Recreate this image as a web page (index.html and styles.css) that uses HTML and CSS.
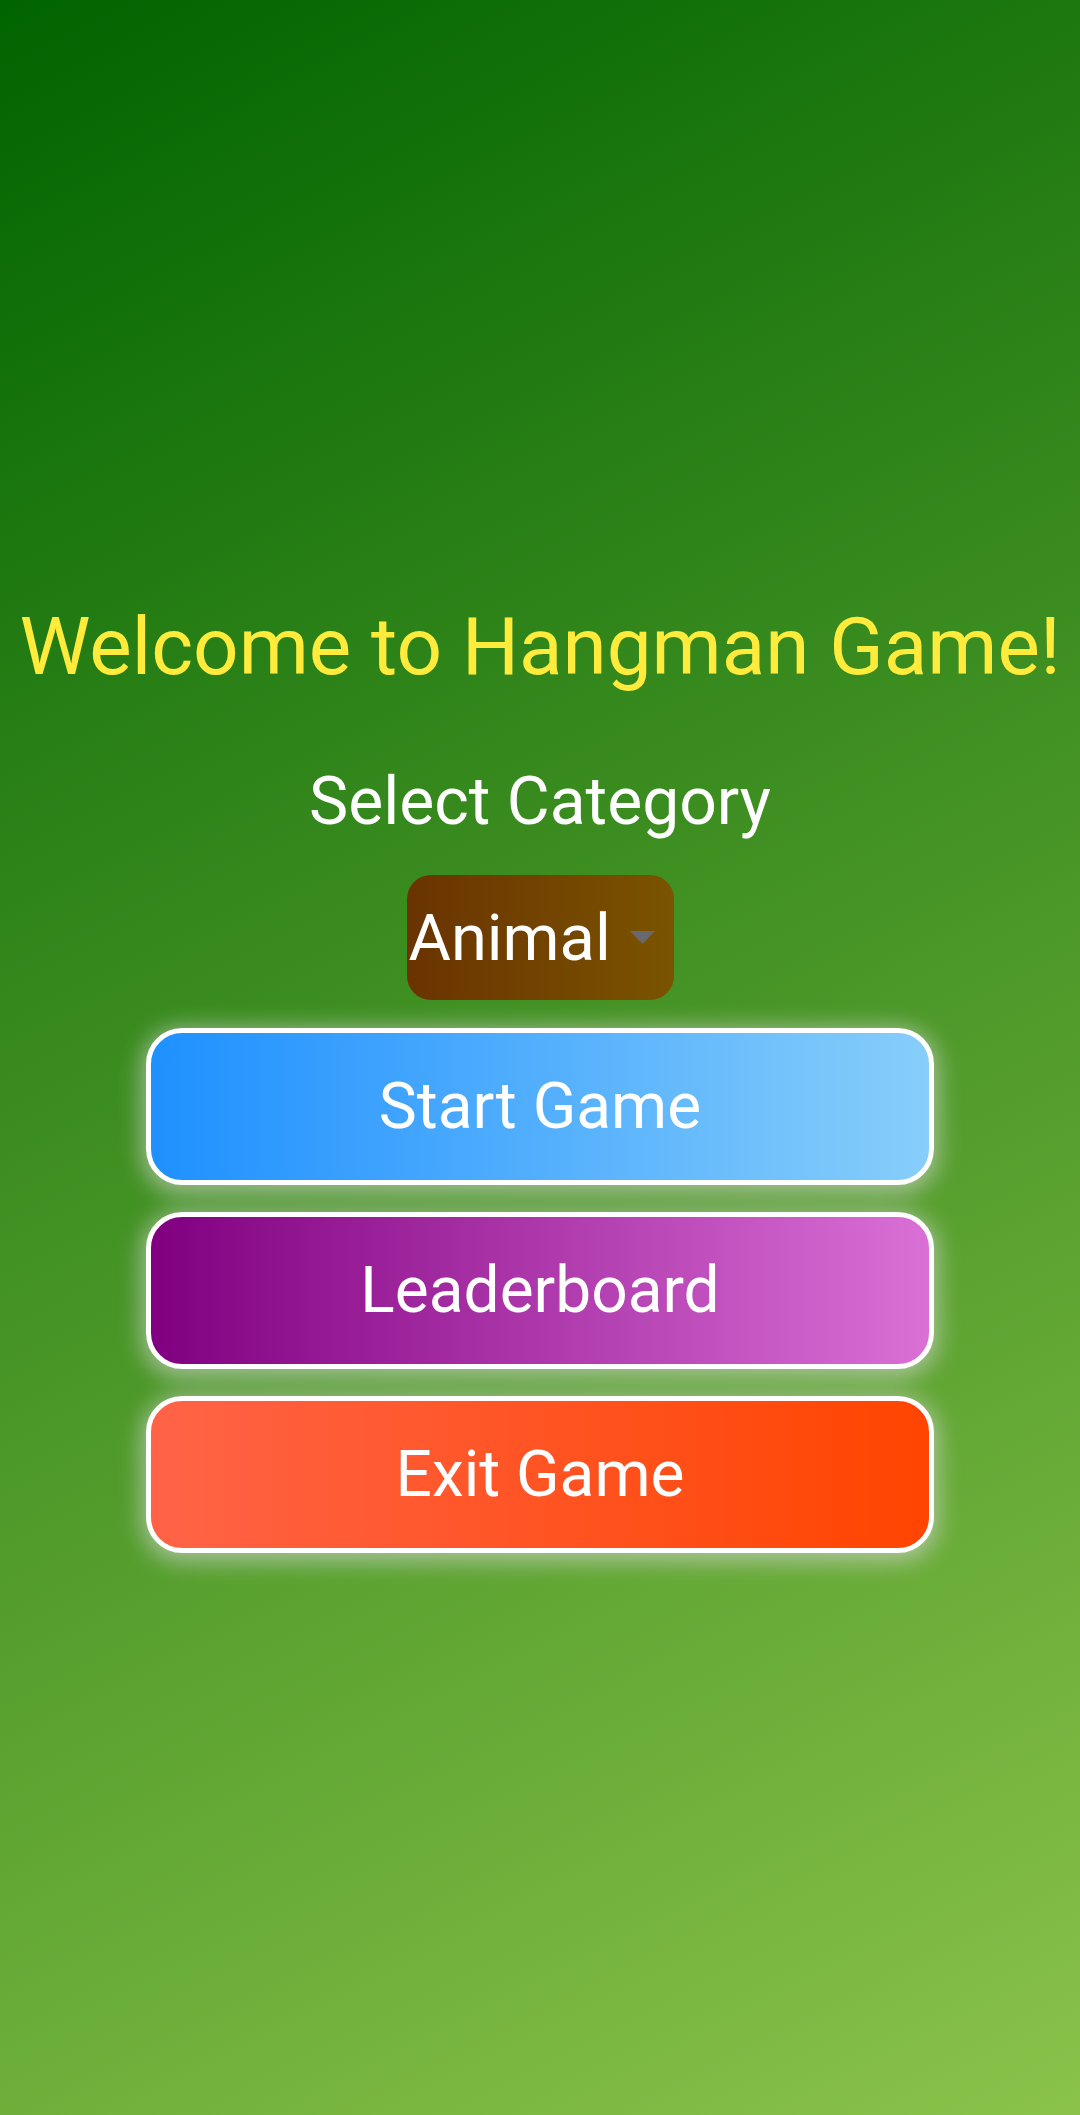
FILE: index.html
```html
<!DOCTYPE html>
<html lang="en">
<head>
<meta charset="utf-8">
<title>Hangman</title>
<link rel="stylesheet" href="styles.css">
</head>
<body>
<main class="screen">
  <h1 class="title">Welcome to Hangman Game!</h1>
  <p class="label">Select Category</p>
  <div class="dropdown">
    <span class="dropdown-value">Animal</span>
    <svg class="dropdown-arrow" width="25" height="13" viewBox="0 0 25 13"><polygon points="0,0 25,0 12.5,13" fill="#68686f"/></svg>
  </div>
  <div class="buttons">
    <button class="btn btn-start">Start Game</button>
    <button class="btn btn-board">Leaderboard</button>
    <button class="btn btn-exit">Exit Game</button>
  </div>
</main>
</body>
</html>
```

FILE: styles.css
```css
html, body {
  margin: 0;
  padding: 0;
}

body {
  width: 1080px;
  height: 2115px;
  overflow: hidden;
  font-family: Roboto, "Noto Sans", "Liberation Sans", sans-serif;
}

.screen {
  box-sizing: border-box;
  width: 1080px;
  height: 2115px;
  padding-top: 600px;
  display: flex;
  flex-direction: column;
  align-items: center;
  background: linear-gradient(153deg, #006400 0%, #8bc34a 100%);
}

.title {
  margin: 0;
  font-size: 80px;
  line-height: 94px;
  font-weight: 400;
  color: #ffeb3b;
  white-space: nowrap;
}

.label {
  margin: 70px 0 0;
  font-size: 66px;
  line-height: 75px;
  color: #ffffff;
}

.dropdown {
  box-sizing: border-box;
  margin-top: 36px;
  width: 267px;
  height: 125px;
  padding: 0 19px 0 2px;
  border-radius: 24px;
  background: linear-gradient(to right, #6a3300, #7a5400);
  display: flex;
  align-items: center;
  justify-content: space-between;
}

.dropdown-value {
  font-size: 65px;
  line-height: 76px;
  color: #ffffff;
}

.dropdown-arrow {
  display: block;
  flex: none;
}

.buttons {
  margin-top: 28px;
  display: flex;
  flex-direction: column;
  gap: 27px;
}

.btn {
  box-sizing: border-box;
  width: 788px;
  height: 157px;
  border: 5px solid #ffffff;
  border-radius: 36px;
  font-family: Roboto, "Noto Sans", "Liberation Sans", sans-serif;
  font-size: 64px;
  line-height: 75px;
  color: #ffffff;
  padding: 0;
  box-shadow: 0 4px 22px 5px rgba(215, 215, 215, 0.6);
}

.btn-start {
  background: linear-gradient(to right, #1e90ff, #87cefa);
}

.btn-board {
  background: linear-gradient(to right, #800080, #da70d6);
}

.btn-exit {
  background: linear-gradient(to right, #ff6347, #ff4500);
}
```
